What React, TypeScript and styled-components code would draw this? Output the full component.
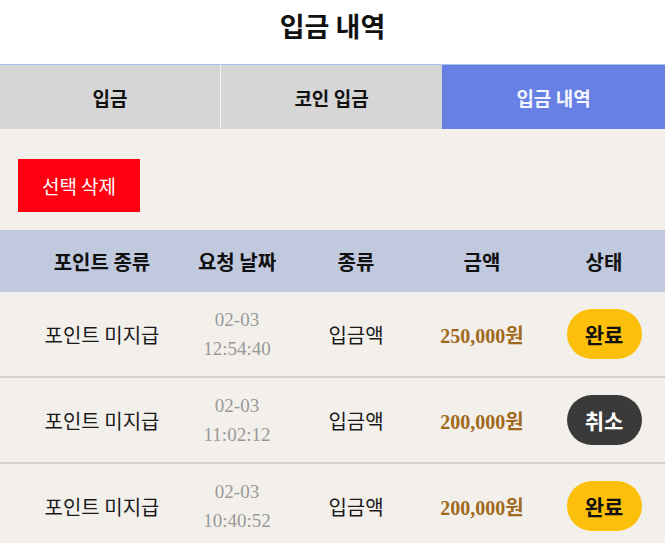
import styled, { createGlobalStyle } from 'styled-components'

const GlobalStyle = createGlobalStyle`
  html, body {
    margin: 0;
    padding: 0;
    background: #f3f0ec;
    font-family: 'Noto Sans CJK KR', 'Noto Sans', sans-serif;
  }
`

type Status = 'done' | 'cancel'

interface Deposit {
  kind: string
  date: string
  time: string
  type: string
  amount: string
  status: Status
}

const deposits: Deposit[] = [
  { kind: '포인트 미지급', date: '02-03', time: '12:54:40', type: '입금액', amount: '250,000', status: 'done' },
  { kind: '포인트 미지급', date: '02-03', time: '11:02:12', type: '입금액', amount: '200,000', status: 'cancel' },
  { kind: '포인트 미지급', date: '02-03', time: '10:40:52', type: '입금액', amount: '200,000', status: 'done' }
]

const tabs = ['입금', '코인 입금', '입금 내역']

export default function App () {
  return (
    <>
      <GlobalStyle />
      <Page>
        <Header>
          <Title>입금 내역</Title>
        </Header>
        <Tabs>
          {tabs.map((t, i) => (
            <Tab key={t} active={i === 2}>{t}</Tab>
          ))}
        </Tabs>
        <Toolbar>
          <DeleteButton>선택 삭제</DeleteButton>
        </Toolbar>
        <Table>
          <HeadRow>
            <HeadCell>포인트 종류</HeadCell>
            <HeadCell>요청 날짜</HeadCell>
            <HeadCell>종류</HeadCell>
            <HeadCell>금액</HeadCell>
            <HeadCell>상태</HeadCell>
          </HeadRow>
          {deposits.map((d, i) => (
            <BodyRow key={i}>
              <Cell>{d.kind}</Cell>
              <DateCell>
                <span>{d.date}</span>
                <span>{d.time}</span>
              </DateCell>
              <Cell>{d.type}</Cell>
              <Amount>{d.amount}원</Amount>
              <Cell>
                <StatusPill status={d.status}>
                  {d.status === 'done' ? '완료' : '취소'}
                </StatusPill>
              </Cell>
            </BodyRow>
          ))}
        </Table>
      </Page>
    </>
  )
}

const Page = styled.div`
  display: flex;
  flex-direction: column;
  width: 665px;
`

const Header = styled.header`
  display: flex;
  align-items: center;
  justify-content: center;
  height: 64px;
  background: #ffffff;
  border-bottom: 1px solid #a9c1ef;
`

const Title = styled.h1`
  margin: 0;
  font-size: 27px;
  font-weight: 700;
  color: #111;
  margin-top: -13px;
`

const Tabs = styled.nav`
  display: grid;
  grid-template-columns: 220px 222px 223px;
  height: 64px;
  border-bottom: 1px solid #f6f6f6;
`

const Tab = styled.div<{ active?: boolean }>`
  display: flex;
  align-items: center;
  justify-content: center;
  font-size: 19px;
  font-weight: 700;
  color: ${(p) => (p.active ? '#f4f6ff' : '#111')};
  background: ${(p) => (p.active ? '#6680e4' : '#d6d6d6')};
  border-left: ${(p) => (p.active ? 'none' : '1px solid #f4f4f4')};
  &:first-child {
    border-left: none;
  }
`

const Toolbar = styled.div`
  display: flex;
  padding: 29px 18px 18px;
`

const DeleteButton = styled.button`
  width: 122px;
  height: 53px;
  border: none;
  background: #ff0010;
  color: #fff;
  font-family: inherit;
  font-size: 19px;
  font-weight: 400;
  cursor: pointer;
`

const Table = styled.div`
  display: flex;
  flex-direction: column;
`

const rowGrid = `
  display: grid;
  grid-template-columns: 136px 134px 104px 148px 96px;
  padding: 0 13px 0 34px;
  align-items: center;
  justify-items: center;
`

const HeadRow = styled.div`
  ${rowGrid}
  height: 62px;
  background: #c0c9dd;
`

const HeadCell = styled.div`
  font-size: 20px;
  font-weight: 700;
  color: #111;
`

const BodyRow = styled.div`
  ${rowGrid}
  height: 84px;
  border-bottom: 2px solid #d3cfcb;
`

const Cell = styled.div`
  font-size: 20px;
  color: #1a1a1a;
`

const DateCell = styled.div`
  display: flex;
  flex-direction: column;
  align-items: center;
  font-family: 'Liberation Serif', serif;
  font-size: 19px;
  line-height: 29px;
  color: #999;
`

const Amount = styled.div`
  font-family: 'Liberation Serif', 'Noto Sans CJK KR', serif;
  font-size: 20px;
  font-weight: 700;
  color: #a0691c;
`

const StatusPill = styled.span<{ status: Status }>`
  display: flex;
  align-items: center;
  justify-content: center;
  width: 75px;
  height: 50px;
  border-radius: 25px;
  font-size: 21px;
  font-weight: 700;
  background: ${(p) => (p.status === 'done' ? '#fcbf0a' : '#3a3a3a')};
  color: ${(p) => (p.status === 'done' ? '#111' : '#fff')};
`
